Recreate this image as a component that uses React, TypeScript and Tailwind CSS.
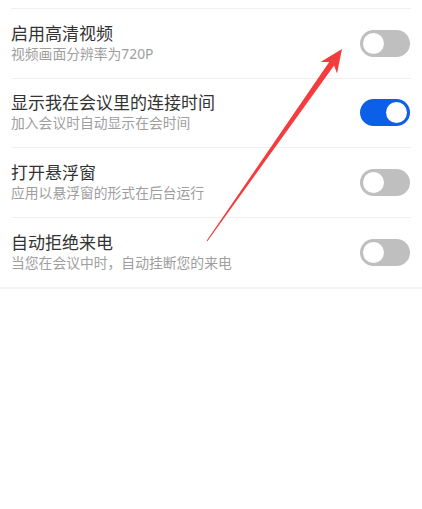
import React from "react"

const items = [
  { title: "启用高清视频", desc: "视频画面分辨率为720P", on: false },
  { title: "显示我在会议里的连接时间", desc: "加入会议时自动显示在会时间", on: true },
  { title: "打开悬浮窗", desc: "应用以悬浮窗的形式在后台运行", on: false },
  { title: "自动拒绝来电", desc: "当您在会议中时，自动挂断您的来电", on: false },
]

function Toggle({ on }: { on: boolean }) {
  return (
    <div
      className={`mr-[1px] flex h-[27px] w-[50px] shrink-0 items-center rounded-full px-[3px] ${
        on ? "justify-end bg-[#0c5fe9]" : "justify-start bg-[#bfbfbf]"
      }`}
    >
      <div className="h-[21px] w-[21px] rounded-full bg-white" />
    </div>
  )
}

export default function App() {
  return (
    <div
      className="relative h-[509px] w-[422px] overflow-hidden bg-white"
      style={{ fontFamily: '"Noto Sans", "Noto Sans CJK SC", sans-serif' }}
    >
      <div className="mx-[11px] h-[9px] border-b border-[#f0f0f0]" />
      {items.map((it, i) => {
        const last = i === items.length - 1
        return (
          <div key={i} className={last ? "border-b-2 border-[#f3f3f3]" : ""}>
            <div
              className={`mx-[11px] flex h-[69.5px] items-center justify-between ${
                last ? "" : "border-b border-[#f0f0f0]"
              }`}
            >
              <div className="flex flex-col">
                <div className="text-[17px] leading-[20px] text-[#333333]">{it.title}</div>
                <div className="mt-[1px] text-[13.8px] leading-[18px] text-[#9e9e9e]">{it.desc}</div>
              </div>
              <Toggle on={it.on} />
            </div>
          </div>
        )
      })}

      {/* red annotation arrow */}
      <svg className="pointer-events-none absolute left-0 top-0" width="422" height="509">
        <polygon
          points="342,49 337,73.5 334.1,65.4 207.4,241.3 206.6,240.7 329.2,62 320.6,62.1"
          fill="#f53b3b"
        />
      </svg>
    </div>
  )
}
